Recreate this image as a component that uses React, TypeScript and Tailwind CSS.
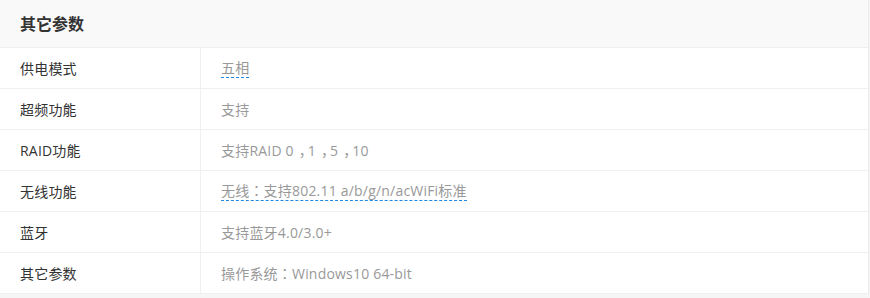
const rows: { label: string; value: string; tip?: boolean }[] = [
  { label: "供电模式", value: "五相", tip: true },
  { label: "超频功能", value: "支持" },
  { label: "RAID功能", value: "支持RAID 0，1，5，10" },
  { label: "无线功能", value: "无线：支持802.11 a/b/g/n/acWiFi标准", tip: true },
  { label: "蓝牙", value: "支持蓝牙4.0/3.0+" },
  { label: "其它参数", value: "操作系统：Windows10 64-bit" },
];

// fullwidth commas sit low and centred in the original font
function Value({ text }: { text: string }) {
  const parts = text.split("，");
  return (
    <>
      {parts.map((p, i) => (
        <span key={i}>
          {p}
          {i < parts.length - 1 && (
            <span
              className="pl-[5px] tracking-[-5px]"
              style={{ fontFamily: '"Noto Sans CJK SC", sans-serif' }}
            >
              ，
            </span>
          )}
        </span>
      ))}
    </>
  );
}

export default function App() {
  return (
    <div
      className="w-[870px] h-[298px] bg-[#f5f5f5] overflow-hidden tracking-[0.2px]"
      style={{ fontFamily: '"Open Sans", "Noto Sans CJK TC", sans-serif' }}
    >
      <div className="w-[869px] bg-white border-r border-[#ebebeb]">
        <div className="h-[48px] bg-[#f9f9f9] border-b border-[#eeeeee] flex items-center pl-5">
          <h2 className="text-[16px] font-bold text-[#333] leading-none tracking-normal">其它参数</h2>
        </div>
        {rows.map((r) => (
          <div key={r.label} className="flex h-[41px] border-b border-[#f0f0f0] text-[14px]">
            <div className="w-[201px] border-r border-[#f0f0f0] pl-5 flex items-center text-[#333]">
              {r.label}
            </div>
            <div className="flex-1 pl-5 flex items-center text-[#999]">
              <span className={r.tip ? "border-b border-dashed border-[#1e88e5] leading-[18px]" : ""}>
                <Value text={r.value} />
              </span>
            </div>
          </div>
        ))}
      </div>
    </div>
  );
}
